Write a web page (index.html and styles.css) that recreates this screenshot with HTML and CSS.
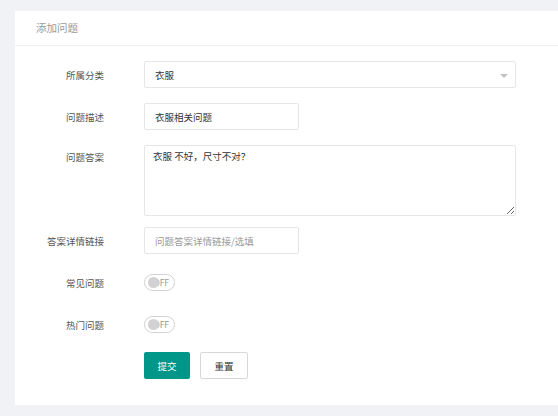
FILE: index.html
```html
<!DOCTYPE html>
<html lang="zh-CN">
<head>
<meta charset="utf-8">
<title>添加问题</title>
<link rel="stylesheet" href="styles.css">
</head>
<body>
<div class="page">
  <div class="card">
    <div class="card-header">添加问题</div>
    <form class="form">
      <div class="row">
        <label class="label">所属分类</label>
        <div class="select wide">
          <span class="select-text">衣服</span>
          <span class="arrow"></span>
        </div>
      </div>
      <div class="row">
        <label class="label">问题描述</label>
        <input class="input short" type="text" value="衣服相关问题">
      </div>
      <div class="row row-area">
        <label class="label">问题答案</label>
        <textarea class="textarea wide">衣服 不好，尺寸不对？</textarea>
      </div>
      <div class="row">
        <label class="label">答案详情链接</label>
        <input class="input short" type="text" placeholder="问题答案详情链接/选填">
      </div>
      <div class="row">
        <label class="label">常见问题</label>
        <div class="switch"><span class="switch-text">OFF</span><span class="knob"></span></div>
      </div>
      <div class="row">
        <label class="label">热门问题</label>
        <div class="switch"><span class="switch-text">OFF</span><span class="knob"></span></div>
      </div>
      <div class="row row-btn">
        <span class="label"></span>
        <div class="buttons">
          <button type="button" class="btn btn-primary">提交</button>
          <button type="button" class="btn btn-default">重置</button>
        </div>
      </div>
    </form>
  </div>
</div>
</body>
</html>
```

FILE: styles.css
```css
* { box-sizing: border-box; }
html, body { margin: 0; padding: 0; }
body {
  background: #f0f2f6;
  font-family: "Noto Sans CJK SC", "Noto Sans", sans-serif;
  font-size: 9.5px;
  color: #555;
  width: 558px;
  height: 416px;
  overflow: hidden;
}
.page {
  padding: 11px 0 11px 15px;
}
.card {
  background: #fff;
  height: 394px;
}
.card-header {
  height: 35px;
  line-height: 34px;
  padding-left: 21px;
  font-size: 10.5px;
  color: #999;
  border-bottom: 1px solid #f0f0f0;
}
.form {
  padding-top: 15px;
}
.row {
  display: flex;
  align-items: center;
  height: 27px;
  margin-bottom: 15px;
}
.row-area {
  height: 71px;
  align-items: flex-start;
  margin-bottom: 11px;
}
.row-area .label { padding-top: 5px; }
.row-btn { margin-top: -1px; }
.label {
  width: 89px;
  margin-right: 40px;
  text-align: right;
  color: #555;
  font-size: 9.5px;
  flex-shrink: 0;
}
.wide { width: 372px; }
.short { width: 155px; }
.select, .input, .textarea {
  border: 1px solid #e6e6e6;
  border-radius: 2px;
  background: #fff;
  font-family: inherit;
  font-size: 9.5px;
  color: #333;
}
.select {
  position: relative;
  height: 27px;
  display: flex;
  align-items: center;
  padding-left: 10px;
}
.arrow {
  position: absolute;
  right: 7px;
  top: 12px;
  width: 0;
  height: 0;
  border-left: 4.5px solid transparent;
  border-right: 4.5px solid transparent;
  border-top: 4px solid #c2c2c2;
}
.input {
  height: 27px;
  padding: 0 10px;
  outline: none;
  margin: 0;
}
.input::placeholder { color: #999; }
.textarea {
  height: 71px;
  padding: 3px 8px;
  line-height: 14px;
  resize: vertical;
  margin: 0;
  outline: none;
}
.switch {
  position: relative;
  width: 31px;
  height: 17px;
  border: 1px solid #d2d2d2;
  border-radius: 9px;
  display: flex;
  align-items: center;
  justify-content: flex-end;
  padding-right: 5px;
  overflow: hidden;
}
.switch-text {
  font-family: "Noto Sans", sans-serif;
  font-size: 9px;
  color: #999;
}
.knob {
  position: absolute;
  left: 3px;
  top: 2px;
  width: 11px;
  height: 11px;
  border-radius: 50%;
  background: #d2d2d2;
}
.buttons {
  display: flex;
  gap: 10px;
}
.btn {
  height: 27px;
  font-family: inherit;
  font-size: 9.5px;
  border-radius: 2px;
  padding: 0;
  cursor: pointer;
}
.btn-primary {
  width: 46px;
  background: #009688;
  color: #fff;
  border: none;
}
.btn-default {
  width: 48px;
  background: #fff;
  color: #333;
  border: 1px solid #d8d8d8;
}
```
